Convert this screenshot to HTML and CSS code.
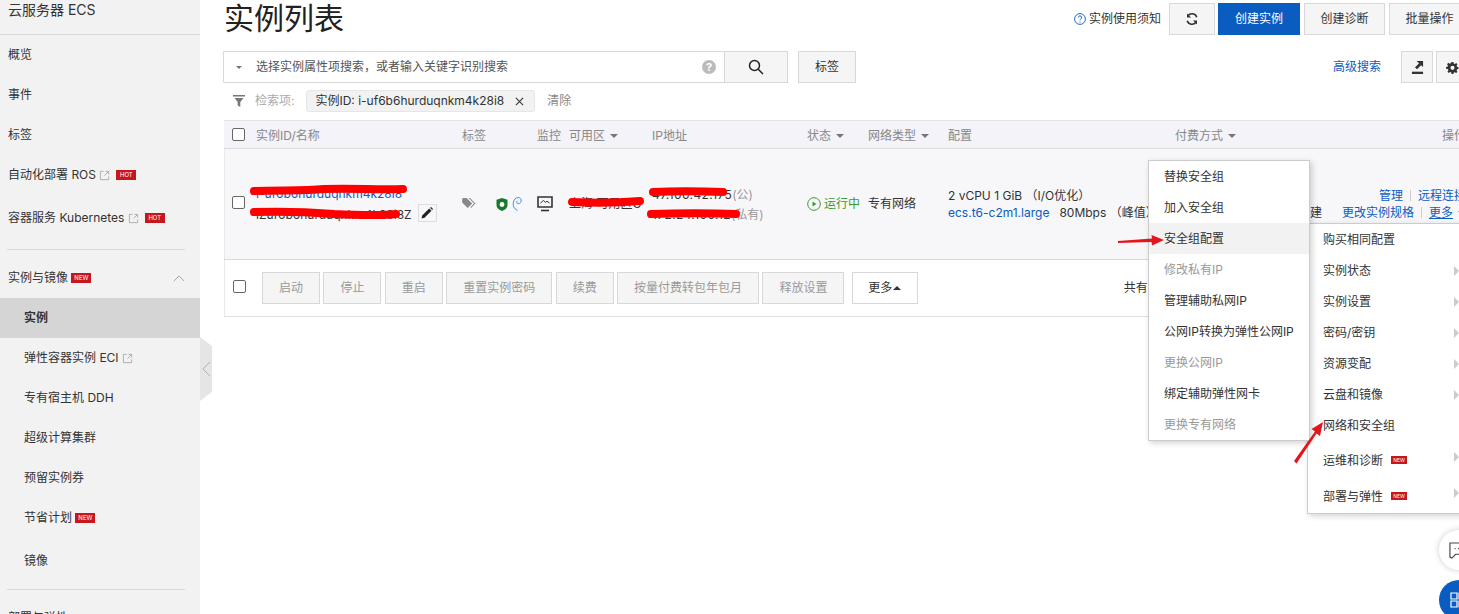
FILE: index.html
```html
<!DOCTYPE html>
<html lang="zh-CN">
<head>
<meta charset="utf-8">
<title>实例列表</title>
<link rel="stylesheet" href="styles.css">
</head>
<body>
<div class="page">
  <aside class="side">
    <div class="side-head">云服务器 ECS</div>
    <nav class="side-nav">
      <a class="nav">概览</a>
      <a class="nav">事件</a>
      <a class="nav">标签</a>
      <a class="nav">自动化部署 ROS <svg class="ext" viewBox="0 0 12 12"><path d="M5 1.5H1.5v9h9V7M7 1.5h3.5V5M10.5 1.5L6 6"/></svg><b class="hot">HOT</b></a>
      <a class="nav nav-tall">容器服务 Kubernetes <svg class="ext" viewBox="0 0 12 12"><path d="M5 1.5H1.5v9h9V7M7 1.5h3.5V5M10.5 1.5L6 6"/></svg><b class="hot">HOT</b></a>
      <div class="side-rule"></div>
      <a class="nav nav-group">实例与镜像 <b class="hot">NEW</b><svg class="chev" viewBox="0 0 14 8"><path d="M1 7l6-6 6 6"/></svg></a>
      <a class="nav sub active">实例</a>
      <a class="nav sub">弹性容器实例 ECI <svg class="ext" viewBox="0 0 12 12"><path d="M5 1.5H1.5v9h9V7M7 1.5h3.5V5M10.5 1.5L6 6"/></svg></a>
      <a class="nav sub">专有宿主机 DDH</a>
      <a class="nav sub">超级计算集群</a>
      <a class="nav sub">预留实例券</a>
      <a class="nav sub">节省计划 <b class="hot">NEW</b></a>
      <a class="nav sub nav-last">镜像</a>
      <div class="side-rule rule-2"></div>
      <a class="nav">部署与弹性</a>
    </nav>
  </aside>
  <div class="collapse"><svg viewBox="0 0 10 18"><path d="M9 1L1 9l8 8"/></svg></div>

  <main class="main">
    <header class="top">
      <h1 class="title">实例列表</h1>
      <div class="top-actions">
        <a class="notice"><svg class="qmark" viewBox="0 0 12 12"><circle cx="6" cy="6" r="5.4"/><path d="M4.3 4.6a1.7 1.7 0 1 1 2.5 1.5c-.6.3-.8.6-.8 1.2M6 8.5v1"/></svg>实例使用须知</a>
        <button class="btn btn-icon btn-refresh"><svg viewBox="0 0 14 14"><path d="M11.8 5.2A5 5 0 0 0 3 3.8M2.2 8.8A5 5 0 0 0 11 10.2"/><path class="fill" d="M2 1.4v4h4zM12 12.6v-4H8z"/></svg></button>
        <button class="btn btn-primary">创建实例</button>
        <button class="btn btn-wide">创建诊断</button>
        <button class="btn btn-wide">批量操作</button>
      </div>
    </header>

    <div class="search-row">
      <div class="search">
        <i class="caret caret-grey caret-small"></i>
        <span class="search-text">选择实例属性项搜索，或者输入关键字识别搜索</span>
        <span class="search-help">?</span>
      </div>
      <button class="btn search-btn"><svg viewBox="0 0 16 16"><circle cx="6.5" cy="6.5" r="5"/><path d="M10.2 10.2L15 15"/></svg></button>
      <button class="btn tag-btn">标签</button>
      <a class="adv">高级搜索</a>
      <button class="btn btn-square"><svg viewBox="0 0 14 14"><path class="fill" d="M1 11.500h12V14H1z"/><path class="fill" d="M6 0h7v6.500L10.800 4.500 6.500 9 4.300 7l4.400-4.500z"/></svg></button>
      <button class="btn btn-square"><svg viewBox="0 0 14 14"><path class="fill" d="M6 1h2l.3 1.7 1.2.5L11 2.2l1.4 1.4-1 1.5.5 1.2 1.600.3v2l-1.600.3-.5 1.200 1 1.500-1.400 1.400-1.500-1-1.200.5L8 13.900H6l-.3-1.600-1.200-.5-1.500 1-1.400-1.400 1-1.500-.5-1.200L0 8.400v-2l1.600-.3.5-1.200-1-1.500 1.400-1.400 1.500 1 1.200-.5zM7 5.200a2.200 2.200 0 1 0 0 4.400 2.200 2.200 0 0 0 0-4.400z"/></svg></button>
    </div>

    <div class="filter-row">
      <svg class="funnel" viewBox="0 0 12 12"><path d="M0 0h12v1.500H0zM1.500 3h9L7.300 7v5L4.700 10.500V7z"/></svg>
      <span class="filter-label">检索项:</span>
      <span class="chip">实例ID: i-uf6b6hurduqnkm4k28i8<svg class="chip-x" viewBox="0 0 10 10"><path d="M1 1l8 8M9 1l-8 8"/></svg></span>
      <span class="clear">清除</span>
    </div>

    <section class="table">
      <div class="cols thead">
        <span class="cell-check"><i class="check"></i></span>
        <span>实例ID/名称</span>
        <span>标签</span>
        <span>监控</span>
        <span>可用区<i class="caret caret-grey"></i></span>
        <span>IP地址</span>
        <span>状态<i class="caret caret-grey"></i></span>
        <span>网络类型<i class="caret caret-grey"></i></span>
        <span>配置</span>
        <span>付费方式<i class="caret caret-grey"></i></span>
        <span class="th-ops">操作</span>
      </div>
      <div class="cols tbody">
        <span class="cell-check"><i class="check"></i></span>
        <div class="two-line id-cell">
          <a class="link">i-uf6b6hurduqnkm4k28i8</a>
          <span class="name">iZuf6b6hurduqnkm4k28i8Z<i class="pencil"><svg viewBox="0 0 12 12"><path d="M0.500 11.500l.7-3L8.200 1.500l2.300 2.300-7 7zM9 .7l.6-.4c.3-.2.7-.2 1 .1l1 1c.3.3.3.7.1 1l-.4.600z"/></svg></i></span>
        </div>
        <span class="icon-cell"><svg class="tag-ic" viewBox="0 0 16 12"><path d="M0 1.500C0 .7.600 0 1.400 0h3.500l6 6-4.900 5L0 5zM7 0h1.500l6 6-4.800 5L9 10.200 13 6z"/></svg><svg class="shield" viewBox="0 0 12 13"><path d="M6 0l5.500 1.800V7c0 3-2.600 5-5.500 6C3.100 12 .5 10 .5 7V1.800z"/><circle cx="6" cy="6.500" r="2.400" fill="#fff"/></svg><svg class="swirl" viewBox="0 0 10 15"><path d="M5.500 14C2.500 12.500 1 10 1.200 6.800 1.500 3 4 1 6.300 1c2 0 3.200 1.800 2.800 3.800-.3 1.700-2 2.700-3.400 2.200C4.500 6.500 4.300 5 5.300 4.300"/></svg></span>
        <span class="icon-cell"><svg class="monitor" viewBox="0 0 16 16"><path d="M1 1h14v10H1z"/><path class="stand" d="M4 14.500h8"/><path class="wave" d="M3.500 7l3-2.500 2 1.800 1.500-1 2.500 1.700"/></svg></span>
        <span class="zone">上海 可用区G</span>
        <div class="two-line ip">
          <span>47.100.42.175<em>(公)</em></span>
          <span>172.24.100.12<em>(私有)</em></span>
        </div>
        <span class="status"><svg viewBox="0 0 14 14"><circle cx="7" cy="7" r="6.300"/><path class="fill" d="M5.500 4.500L9.500 7l-4 2.500z"/></svg>运行中</span>
        <span>专有网络</span>
        <div class="two-line conf">
          <span>2 vCPU 1 GiB （I/O优化）</span>
          <span><a class="link">ecs.t6-c2m1.large</a><span class="bw">80Mbps （峰值）</span></span>
        </div>
        <div class="two-line pay">
          <span>&nbsp;</span>
          <span>2021年创建</span>
        </div>
        <div class="two-line ops">
          <span class="ops-a"><a class="link">管理</a><i class="sep"></i><a class="link">远程连接</a></span>
          <span class="ops-b"><a class="link">更改实例规格</a><i class="sep"></i><a class="link more-link">更多</a><i class="caret caret-blue"></i></span>
        </div>
      </div>
      <div class="foot">
        <span class="cell-check foot-check"><i class="check"></i></span>
        <div class="foot-btns">
          <button class="btn btn-off">启动</button>
          <button class="btn btn-off">停止</button>
          <button class="btn btn-off">重启</button>
          <button class="btn btn-off">重置实例密码</button>
          <button class="btn btn-off">续费</button>
          <button class="btn btn-off">按量付费转包年包月</button>
          <button class="btn btn-off">释放设置</button>
          <button class="btn btn-more">更多<i class="caret-up"></i></button>
        </div>
        <span class="total">共有1条</span>
      </div>
    </section>
  </main>

  <ul class="menu menu-b">
    <li>购买相同配置</li>
    <li class="has-sub">实例状态</li>
    <li class="has-sub">实例设置</li>
    <li class="has-sub">密码/密钥</li>
    <li class="has-sub">资源变配</li>
    <li class="has-sub">云盘和镜像</li>
    <li>网络和安全组</li>
    <li class="has-sub tall">运维和诊断<b class="hot mini">NEW</b></li>
    <li class="has-sub tall">部署与弹性<b class="hot mini">NEW</b></li>
  </ul>
  <ul class="menu menu-a">
    <li>替换安全组</li>
    <li>加入安全组</li>
    <li class="on">安全组配置</li>
    <li class="off">修改私有IP</li>
    <li>管理辅助私网IP</li>
    <li>公网IP转换为弹性公网IP</li>
    <li class="off">更换公网IP</li>
    <li>绑定辅助弹性网卡</li>
    <li class="off">更换专有网络</li>
  </ul>

  <svg class="marks" viewBox="0 0 1459 614">
    <g class="scribble">
      <path d="M254 191c30-1 50 0 70-2 30-1 55 1 79 0"/>
      <path d="M254 212c30-1 55 0 80 2 20 1 45 2 62 0"/>
      <path d="M572 202c20 1 45 1 68-1"/>
      <path d="M653 192c20-1 45-1 70 0"/>
      <path d="M651 214c30-1 60-1 85 0"/>
    </g>
    <g class="arrow">
      <path d="M1118 241l34-2.500-.5-3.500 12.500 5-12 5.500-.5-3.500-33.500 1z"/>
      <path d="M1294 461l21-29.500-3.500-2.500 11.500-7-3 14-3.500-2.500-20 30z"/>
    </g>
  </svg>

  <button class="float float-chat"><svg viewBox="0 0 18 18"><path d="M1 1h16v12H7l-4 4-2-1z"/><path class="dots" d="M6 7h1M9.500 7h1"/></svg></button>
  <button class="float float-app"><svg viewBox="0 0 16 16"><path d="M1 1h6v6H1zM1 9h6v6H1zM9 1h6v6H9zM9 9h6v6H9z"/></svg></button>
</div>
</body>
</html>
```
FILE: styles.css
```css
* { box-sizing: border-box; }
html, body { margin: 0; padding: 0; background: #fff; }
body { font: 12px/18px "Inter", "Noto Sans CJK SC", sans-serif; color: #333; }
.page { position: relative; display: flex; width: 1459px; height: 614px; overflow: hidden; }
ul { list-style: none; margin: 0; padding: 0; }
button { font: inherit; }

.side { flex: none; width: 200px; height: 640px; background: #f2f2f2; font-size: 12px; }
.side-head { height: 35px; padding: 1px 0 0 8px; line-height: 18px; border-bottom: 1px solid #d9d9d9; font-size: 14px; color: #333; }
.side-nav { display: flex; flex-direction: column; }
.nav { display: flex; align-items: center; height: 40px; padding-left: 8px; color: #333; white-space: pre; }
.nav-tall { height: 46px; }
.side-rule { flex: none; height: 1px; margin: 8px 15px 0 7px; background: #d9d9d9; }
.nav-group { height: 48px; padding-top: 8px; padding-right: 15px; }
.sub { padding-left: 24px; }
.active { background: #d5d5d5; font-weight: 700; }
.nav-last { height: 46px; }
.rule-2 { margin-top: 5px; margin-bottom: 8px; }
.ext { width: 11px; height: 11px; margin: 0 6px 0 0; fill: none; stroke: #aaa; stroke-width: 1; }
.hot { display: inline-block; width: 20px; height: 10px; background: #c8161d; color: #fff; font-size: 6px; line-height: 10px; font-weight: 400; text-align: center; }
.chev { width: 12px; height: 7px; margin-left: auto; fill: none; stroke: #999; stroke-width: 1; }
.collapse { position: absolute; left: 200px; top: 337px; width: 12px; height: 64px; background: #e5e5e5; clip-path: polygon(0 0, 100% 14%, 100% 86%, 0 100%); display: flex; align-items: center; }
.collapse svg { width: 9px; height: 16px; margin-left: 2px; fill: none; stroke: #aaa; stroke-width: 1; }

.main { flex: none; width: 1270px; padding: 3px 0 0 24px; }
.top { display: flex; justify-content: space-between; align-items: center; height: 32px; }
.title { margin: -2px 0 0; font-size: 30px; line-height: 32px; font-weight: 400; color: #222; }
.top-actions { display: flex; align-items: center; }
.notice { display: flex; align-items: center; margin-right: 8px; color: #333; }
.qmark { width: 12px; height: 12px; margin-right: 3px; fill: none; stroke: #0a5cc0; stroke-width: .9; }
.btn { display: inline-flex; align-items: center; justify-content: center; height: 32px; padding: 0 16px; border: 1px solid #d8d8d8; background: #f5f5f5; color: #333; white-space: nowrap; }
.btn svg { display: block; }
.btn-icon { width: 46px; padding: 0; margin-right: 3px; }
.btn-refresh svg { width: 14px; height: 14px; fill: none; stroke: #333; stroke-width: 1.600; }
.fill { fill: #333; stroke: none; }
.btn-primary { width: 82px; padding: 0; background: #0a5cc0; border-color: #0a5cc0; color: #fff; margin-right: 4px; }
.btn-wide { width: 81px; padding: 0; margin-right: 4px; }
.btn-wide:last-child { margin-right: 0; }

.search-row { display: flex; margin-top: 16px; margin-left: -1px; }
.search { display: flex; align-items: center; width: 502px; height: 32px; padding-left: 12px; border: 1px solid #d8d8d8; background: #fff; border-radius: 1px; }
.search-text { margin-left: 14px; color: #555; }
.search-help { width: 14px; height: 14px; margin-left: auto; margin-right: 8px; border-radius: 50%; background: #bbb; color: #fff; font-size: 11px; line-height: 14px; text-align: center; font-weight: 700; }
.search-btn { width: 64px; margin-left: -1px; padding: 0; }
.search-btn svg { width: 16px; height: 16px; fill: none; stroke: #222; stroke-width: 1.500; }
.tag-btn { width: 58px; margin-left: 10px; padding: 0; }
.adv { margin-left: auto; margin-right: 20px; align-self: center; color: #0a5cc0; }
.btn-square { width: 32px; padding: 0; margin-right: 3px; }
.btn-square:last-child { margin-right: 2px; }
.btn-square svg { width: 13px; height: 13px; }

.filter-row { display: flex; align-items: center; height: 22px; margin-top: 7px; }
.funnel { width: 12px; height: 12px; margin-left: 9px; fill: #777; }
.filter-label { margin-left: 10px; color: #aaa; }
.chip { display: inline-flex; align-items: center; height: 22px; margin-left: 12px; padding: 0 10px 0 8px; background: #f2f2f2; border: 1px solid #e6e6e6; border-radius: 3px; color: #333; }
.chip-x { width: 9px; height: 9px; margin-left: 11px; fill: none; stroke: #333; stroke-width: 1.200; }
.clear { margin-left: 12px; color: #888; }

.table { width: 1300px; margin-top: 8px; }
.cols { display: grid; grid-template-columns: 32px 206px 75px 32px 83px 155px 61px 80px 227px 155px 136px 1fr; align-items: center; }
.thead { height: 29px; padding-top: 2px; background: #f3f3f9; border-top: 1px solid #e3e3e3; border-bottom: 1px solid #dcdcdc; color: #888; }
.thead .cell-check { padding-bottom: 3px; }
.th-ops { padding-left: 112px; white-space: nowrap; }
.tbody { height: 111px; background: #f7f7fa; border-bottom: 1px solid #d9d9d9; box-shadow: inset 1px 0 0 #e8e8e8; }
.tbody .cell-check { padding-bottom: 4px; }
.cell-check { display: flex; justify-content: flex-start; padding-left: 8px; }
.check { display: block; width: 13px; height: 13px; border: 1px solid #666; border-radius: 2px; background: #fff; }
.caret { display: inline-block; width: 0; height: 0; margin-left: 5px; border: 4px solid transparent; border-bottom: 0; vertical-align: 2px; }
.caret-small { margin-left: 0; border-width: 3px; border-bottom: 0; }
.caret-grey { border-top-color: #777; }
.caret-blue { border-top-color: #0a5cc0; }
.two-line { display: flex; flex-direction: column; line-height: 17px; white-space: nowrap; }
.link { color: #0a5cc0; }
.id-cell { gap: 3px; }
.name { display: flex; align-items: center; height: 18px; color: #333; }
.pencil { display: flex; align-items: center; justify-content: center; flex: none; width: 19px; height: 18px; margin: -2px 0 0 6px; border: 1px solid #ddd; }
.pencil svg { width: 12px; height: 12px; fill: #222; }
.icon-cell { display: flex; align-items: center; }
.tag-ic { width: 15px; height: 11px; fill: #888; margin: 0 19px 2px 0; }
.shield { width: 12px; height: 13px; fill: #177a2b; margin-right: 4px; }
.swirl { width: 10px; height: 16px; fill: none; stroke: #3d8fd8; stroke-width: 1; }
.monitor { width: 16px; height: 16px; fill: none; stroke: #333; stroke-width: 1.600; }
.wave { stroke-width: 1; }
.zone { white-space: nowrap; }
.ip { gap: 3px; color: #333; letter-spacing: .4px; }
.ip em { font-style: normal; color: #999; letter-spacing: 0; }
.status { display: flex; align-items: center; white-space: nowrap; color: #3a9a2e; }
.status svg { width: 14px; height: 14px; margin-right: 3px; fill: none; stroke: #3a9a2e; stroke-width: 1; }
.status .fill { fill: #3a9a2e; }
.bw { margin-left: 10px; }
.pay { align-items: flex-end; padding-right: 8px; }
.ops { align-items: flex-end; }
.ops-a, .ops-b { display: flex; align-items: center; white-space: nowrap; }
.sep { width: 1px; height: 11px; margin: 0 7px; background: #ccc; }
.more-link { text-decoration: underline; }

.foot { display: flex; align-items: center; height: 57px; border-bottom: 1px solid #e0e0e0; box-shadow: inset 1px 0 0 #e8e8e8; }
.foot-check { flex: none; width: 38px; padding: 0 0 3px 9px; }
.foot-btns { display: flex; gap: 3.400px; }
.btn-off { color: #999; background: #f5f5f5; }
.btn-more { margin-left: 4px; width: 66px; padding: 0; background: #fff; color: #333; }
.caret-up { display: inline-block; width: 0; height: 0; margin-left: 1px; border: 4px solid transparent; border-top: 0; border-bottom: 4px solid #333; }
.total { margin-left: 206px; color: #333; }

.menu { position: absolute; background: #fff; border: 1px solid #ccc; box-shadow: 2px 2px 6px rgba(0,0,0,.18); color: #333; }
.menu-a { left: 1148px; top: 160px; width: 162px; height: 281px; }
.menu-a li { height: 31px; padding-left: 15px; line-height: 31px; white-space: nowrap; }
.menu-a .on { background: #f2f2f2; }
.menu-a .off { color: #999; }
.menu-b { left: 1307px; top: 223px; width: 170px; height: 291px; }
.menu-b li { position: relative; height: 31px; padding-left: 15px; line-height: 31px; }
.menu-b .tall { height: 36px; line-height: 39px; }
.has-sub::after { content: ""; position: absolute; left: 146px; top: 11px; border: 5px solid transparent; border-right: 0; border-left-color: #ccc; }
.mini { width: 16px; height: 8px; line-height: 8px; font-size: 5px; margin-left: 8px; vertical-align: 3px; }

.marks { position: absolute; left: 0; top: 0; width: 1459px; height: 614px; pointer-events: none; }
.scribble path { fill: none; stroke: #f00; stroke-width: 8; stroke-linecap: round; }
.arrow path { fill: #e3161b; }

.float { position: absolute; display: flex; align-items: center; justify-content: center; width: 40px; height: 40px; padding: 0; border-radius: 50%; border: 0; }
.float-chat { left: 1439px; top: 530px; justify-content: flex-start; padding-left: 10px; background: #fff; box-shadow: 0 0 6px rgba(0,0,0,.2); }
.float-chat svg { width: 17px; height: 17px; fill: none; stroke: #444; stroke-width: 1.200; }
.float-app { left: 1439px; top: 580px; justify-content: flex-start; padding-left: 11px; background: #0a5cc0; }
.float-app svg { width: 16px; height: 16px; fill: none; stroke: #fff; stroke-width: 1.200; }
```
